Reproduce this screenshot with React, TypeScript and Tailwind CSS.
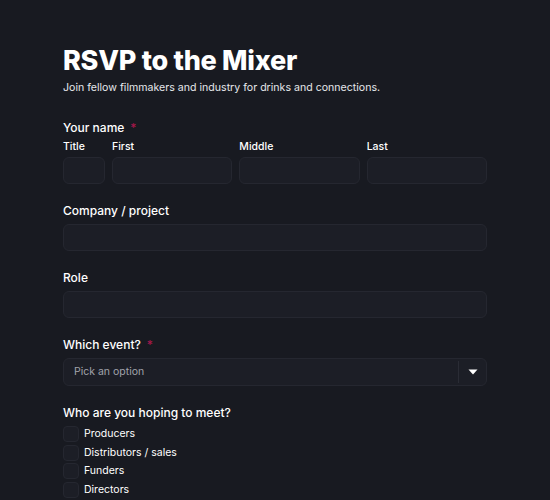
import React from "react";

function Req() {
  return <span className="ml-1.5 text-[#a3174a]">*</span>;
}

function Field({ label, required }: { label: string; required?: boolean }) {
  return (
    <div className="flex flex-col gap-1">
      <label className="text-[12px] font-medium leading-[18px] text-white">
        {label}
        {required && <Req />}
      </label>
      <input className="h-[27px] w-full rounded-md border border-[#252730] bg-[#1c1e26] px-2.5 text-[11px] text-white outline-none" />
    </div>
  );
}

const parts = [
  { label: "Title", cls: "w-[42px] shrink-0" },
  { label: "First", cls: "flex-1" },
  { label: "Middle", cls: "flex-1" },
  { label: "Last", cls: "flex-1" },
];

const people = ["Producers", "Distributors / sales", "Funders", "Directors", "Writers"];

export default function App() {
  return (
    <div className="min-h-screen bg-[#181a21] font-['Inter',sans-serif] text-white">
      <div className="mx-auto flex w-[424px] flex-col pt-[44px]">
        <h1 className="text-[27px] font-extrabold leading-[33px] tracking-[-0.01em]">RSVP to the Mixer</h1>
        <p className="mt-[3px] text-[10.6px] leading-4 text-[#e5e7eb]">
          Join fellow filmmakers and industry for drinks and connections.
        </p>

        <div className="mt-[23px] flex flex-col gap-[18px]">
          <div className="flex flex-col">
            <label className="text-[12px] font-medium leading-[18px]">
              Your name
              <Req />
            </label>
            <div className="mt-[2px] flex gap-[7px]">
              {parts.map((p) => (
                <div key={p.label} className={`flex flex-col gap-[2px] ${p.cls}`}>
                  <span className="text-[10.5px] font-medium leading-4">{p.label}</span>
                  <input className="h-[27px] w-full rounded-md border border-[#252730] bg-[#1c1e26] px-2 text-[11px] outline-none" />
                </div>
              ))}
            </div>
          </div>

          <Field label="Company / project" />
          <Field label="Role" />

          <div className="flex flex-col gap-1">
            <label className="text-[12px] font-medium leading-[18px]">
              Which event?
              <Req />
            </label>
            <div className="flex h-[28px] items-center rounded-md border border-[#252730] bg-[#1c1e26]">
              <span className="flex-1 pl-[10px] text-[10.5px] text-[#a1a3ab]">Pick an option</span>
              <div className="h-[22px] w-px bg-[#2a2c35]" />
              <div className="flex w-[27px] items-center justify-center">
                <svg width="10" height="6" viewBox="0 0 10 6">
                  <path d="M0.5 0.5 L9.5 0.5 L5 5.5 Z" fill="#ffffff" />
                </svg>
              </div>
            </div>
          </div>

          <div className="flex flex-col">
            <label className="text-[12px] font-medium leading-[18px]">Who are you hoping to meet?</label>
            <div className="mt-[3px] flex flex-col">
              {people.map((p) => (
                <label key={p} className="flex h-[18.5px] items-center gap-[5px]">
                  <span className="h-[16px] w-[16px] rounded-[4px] border border-[#252730] bg-[#1c1e26]" />
                  <span className="text-[10.5px] leading-4">{p}</span>
                </label>
              ))}
            </div>
          </div>
        </div>
      </div>
    </div>
  );
}
